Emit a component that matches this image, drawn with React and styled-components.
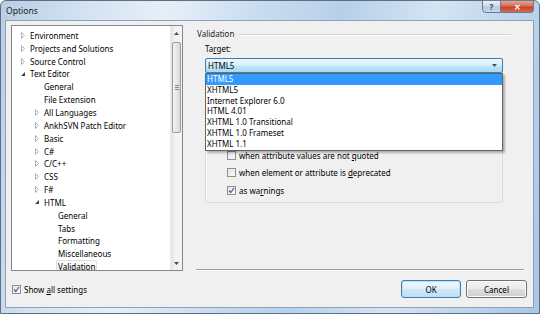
import React from 'react';
import styled, { createGlobalStyle, css } from 'styled-components';

const GlobalStyle = createGlobalStyle`
  html, body { margin: 0; padding: 0; overflow: hidden; }
  body {
    font-family: 'Noto Sans', 'Open Sans', sans-serif;
    font-size: 8px;
    color: #000;
  }
`;

// --- window frame ---
const Window = styled.div`
  width: 540px;
  height: 314px;
  box-sizing: border-box;
  display: flex;
  flex-direction: column;
  border: 1px solid #5d6f86;
  border-radius: 6px 6px 0 0;
  background: linear-gradient(100deg, #b9cde3 0%, #d3e2f1 14%, #e6eff8 28%, #c9dcef 44%, #b7d0ea 58%, #d4e4f3 74%, #aac6e4 100%);
`;

const TitleBar = styled.div`
  height: 19px;
  display: flex;
  align-items: flex-start;
  padding-left: 5px;
`;

const Title = styled.span`
  line-height: 20px;
  font-size: 8.6px;
  color: #1b1b1b;
`;

const CaptionButtons = styled.div`
  margin-left: auto;
  margin-right: 5px;
  margin-top: -1px;
  display: flex;
`;

const CaptionButton = styled.div`
  height: 13px;
  box-sizing: border-box;
  border: 1px solid #6b7b8e;
  display: flex;
  align-items: center;
  justify-content: center;
  font-size: 8px;
  font-weight: bold;
  ${p => p.$close ? css`
    width: 33px;
    border-left: none;
    border-radius: 0 0 4px 0;
    background: linear-gradient(#e8a493 0%, #d3705d 45%, #c3422b 55%, #d76a4c 100%);
    color: #fff;
  ` : css`
    width: 19px;
    border-radius: 0 0 0 4px;
    background: linear-gradient(#e9f0f7 0%, #cfdcea 45%, #b5c8dd 55%, #c9d9ea 100%);
    color: #445;
  `}
`;

const Client = styled.div`
  flex: 1;
  margin: 0 5px 5px 4px;
  border: 1px solid #8ca1b8;
  background: #f0f0f0;
  display: flex;
  flex-direction: column;
`;

const Main = styled.div`
  display: flex;
  padding: 4px 0 0 5px;
`;

// --- tree ---
const TreePanel = styled.div`
  width: 172px;
  height: 246px;
  box-sizing: border-box;
  border: 1px solid #828790;
  background: #fff;
  display: flex;
  overflow: hidden;
`;

const TreeList = styled.div`
  flex: 1;
  padding-top: 3px;
`;

const TreeRow = styled.div`
  height: 12.85px;
  display: flex;
  align-items: center;
  padding-left: ${p => 9 + p.$level * 14}px;
  white-space: nowrap;
`;

const Expander = styled.span`
  width: 7px;
  display: flex;
  align-items: center;
`;

const TreeLabel = styled.span`
  line-height: 11px;
  padding: 0 1px;
  border: 1px solid transparent;
  border-radius: 2px;
  ${p => p.$selected && css`
    border-color: #dedede;
    background: linear-gradient(#fbfbfb, #f0f0f0);
  `}
`;

const ScrollBar = styled.div`
  width: 11px;
  display: flex;
  flex-direction: column;
  background: linear-gradient(90deg, #e3e3e3, #f4f4f4 40%, #f4f4f4);
  border-left: 1px solid #ececec;
`;

const ScrollArrow = styled.div`
  height: 14px;
  display: flex;
  align-items: center;
  justify-content: center;
`;

const ScrollThumb = styled.div`
  margin: 2px 1px 0 1px;
  height: 91px;
  box-sizing: border-box;
  border: 1px solid #9a9a9a;
  border-radius: 2px;
  background: linear-gradient(90deg, #f4f4f4, #e6e6e6 50%, #d8d8d8);
  display: flex;
  align-items: center;
  justify-content: center;
`;

const Grip = styled.div`
  width: 4px;
  height: 5px;
  background: repeating-linear-gradient(#8a8a8a 0 1px, transparent 1px 2px);
`;

const ScrollTrack = styled.div`
  flex: 1;
`;

// --- right pane ---
const Pane = styled.div`
  width: 328px;
  height: 245px;
  margin-left: 13px;
  box-sizing: border-box;
  border-bottom: 1px solid #a0a0a0;
  box-shadow: 0 1px 0 #fff;
  display: flex;
  flex-direction: column;
`;

const SectionHeader = styled.div`
  height: 14px;
  margin-top: 1px;
  padding-left: 1px;
  display: flex;
  align-items: center;
  color: #1e1e1e;
`;

const HeaderLine = styled.div`
  flex: 1;
  height: 1px;
  margin: 2px 13px 0 5px;
  background: #c9d3dd;
  box-shadow: 0 1px 0 #fff;
`;

const PaneBody = styled.div`
  padding: 0 21px 0 9px;
  display: flex;
  flex-direction: column;
`;

const FieldLabel = styled.div`
  margin-top: 3px;
  height: 12px;
  line-height: 12px;
`;

const ComboWrap = styled.div`
  position: relative;
  margin-top: 3px;
  z-index: 2;
`;

const Combo = styled.div`
  height: 15px;
  box-sizing: border-box;
  border: 1px solid #3c7fb1;
  border-radius: 2px;
  background: linear-gradient(#eaf6fd 0%, #d9f0fc 45%, #bee6fd 55%, #a7d9f5 100%);
  display: flex;
  align-items: center;
  padding: 0 5px 0 2px;
`;

const ComboText = styled.span`
  flex: 1;
`;

const DropList = styled.div`
  position: absolute;
  top: 100%;
  left: 0;
  width: 298px;
  box-sizing: border-box;
  border: 1px solid #646464;
  background: #fff;
  box-shadow: 2px 2px 2px rgba(0, 0, 0, 0.28);
`;

const DropItem = styled.div`
  height: 10.8px;
  line-height: 10.8px;
  padding-left: 1px;
  white-space: nowrap;
  ${p => p.$selected && css`
    background: #3399ff;
    color: #fff;
  `}
`;

const GroupBox = styled.div`
  margin-top: 7px;
  height: 123px;
  box-sizing: border-box;
  border: 1px solid #dcdcdc;
  border-radius: 3px;
  box-shadow: inset 1px 1px 0 #fff;
  display: flex;
  flex-direction: column;
  justify-content: flex-end;
  padding: 0 0 3px 21px;
`;

const CheckRow = styled.label`
  height: 17.5px;
  display: flex;
  align-items: center;
  gap: 3px;
  white-space: nowrap;
`;

const Box = styled.span`
  width: 9px;
  height: 9px;
  box-sizing: border-box;
  border: 1px solid #8e8f8f;
  background: linear-gradient(135deg, #e4e4e4, #fbfbfb);
  display: flex;
  align-items: center;
  justify-content: center;
`;

const Key = styled.span`
  text-decoration: underline;
`;

// --- footer ---
const Footer = styled.div`
  flex: 1;
  display: flex;
  align-items: flex-start;
  padding: 9px 6px 0 6px;
`;

const FooterCheck = styled(CheckRow)`
  height: 18px;
`;

const Buttons = styled.div`
  margin-left: auto;
  display: flex;
  gap: 5px;
`;

const Button = styled.div`
  height: 18px;
  box-sizing: border-box;
  border: 1px solid ${p => p.$default ? '#3c7fb1' : '#707070'};
  border-radius: 3px;
  display: flex;
  align-items: center;
  justify-content: center;
  width: ${p => p.$width}px;
  background: ${p => p.$default
    ? 'linear-gradient(#eef7fd 0%, #e0f0fa 48%, #cfe7f6 52%, #c2e0f3 100%)'
    : 'linear-gradient(#f2f2f2 0%, #ebebeb 48%, #dddddd 52%, #cfcfcf 100%)'};
  box-shadow: inset 0 0 0 1px ${p => p.$default ? '#b6e0f7' : '#fcfcfc'};
`;

const Collapsed = () => (
  <svg width="4" height="7" viewBox="0 0 4 7">
    <polygon points="0.5,0.5 3.5,3.5 0.5,6.5" fill="#fff" stroke="#b0b0b0" strokeWidth="1" />
  </svg>
);

const Expanded = () => (
  <svg width="4" height="4" viewBox="0 0 4 4">
    <polygon points="4,0 4,4 0,4" fill="#404040" />
  </svg>
);

const Check = () => (
  <svg width="7" height="7" viewBox="0 0 7 7">
    <path d="M1 3.5 L2.8 5.5 L6 1" fill="none" stroke="#4a5f97" strokeWidth="1.2" />
  </svg>
);

const Arrow = ({ up }) => (
  <svg width="5" height="3" viewBox="0 0 5 3">
    <polygon points={up ? '0,3 5,3 2.5,0' : '0,0 5,0 2.5,3'} fill="#4d4d4d" />
  </svg>
);

const tree = [
  { label: 'Environment', level: 0, exp: 'c' },
  { label: 'Projects and Solutions', level: 0, exp: 'c' },
  { label: 'Source Control', level: 0, exp: 'c' },
  { label: 'Text Editor', level: 0, exp: 'e' },
  { label: 'General', level: 1 },
  { label: 'File Extension', level: 1 },
  { label: 'All Languages', level: 1, exp: 'c' },
  { label: 'AnkhSVN Patch Editor', level: 1, exp: 'c' },
  { label: 'Basic', level: 1, exp: 'c' },
  { label: 'C#', level: 1, exp: 'c' },
  { label: 'C/C++', level: 1, exp: 'c' },
  { label: 'CSS', level: 1, exp: 'c' },
  { label: 'F#', level: 1, exp: 'c' },
  { label: 'HTML', level: 1, exp: 'e' },
  { label: 'General', level: 2 },
  { label: 'Tabs', level: 2 },
  { label: 'Formatting', level: 2 },
  { label: 'Miscellaneous', level: 2 },
  { label: 'Validation', level: 2, selected: true },
];

const targets = ['HTML5', 'XHTML5', 'Internet Explorer 6.0', 'HTML 4.01', 'XHTML 1.0 Transitional', 'XHTML 1.0 Frameset', 'XHTML 1.1'];

const Checkbox = ({ checked }) => <Box>{checked && <Check />}</Box>;

const App = () => (
  <>
    <GlobalStyle />
    <Window>
      <TitleBar>
        <Title>Options</Title>
        <CaptionButtons>
          <CaptionButton>?</CaptionButton>
          <CaptionButton $close>✕</CaptionButton>
        </CaptionButtons>
      </TitleBar>

      <Client>
        <Main>
          <TreePanel>
            <TreeList>
              {tree.map((n, i) => (
                <TreeRow key={i} $level={n.level}>
                  <Expander>
                    {n.exp === 'c' && <Collapsed />}
                    {n.exp === 'e' && <Expanded />}
                  </Expander>
                  <TreeLabel $selected={n.selected}>{n.label}</TreeLabel>
                </TreeRow>
              ))}
            </TreeList>
            <ScrollBar>
              <ScrollArrow><Arrow up /></ScrollArrow>
              <ScrollThumb><Grip /></ScrollThumb>
              <ScrollTrack />
              <ScrollArrow><Arrow /></ScrollArrow>
            </ScrollBar>
          </TreePanel>

          <Pane>
            <SectionHeader>
              Validation
              <HeaderLine />
            </SectionHeader>
            <PaneBody>
              <FieldLabel>Ta<Key>r</Key>get:</FieldLabel>
              <ComboWrap>
                <Combo>
                  <ComboText>HTML5</ComboText>
                  <Arrow />
                </Combo>
                <DropList>
                  {targets.map((t, i) => (
                    <DropItem key={t} $selected={i === 0}>{t}</DropItem>
                  ))}
                </DropList>
              </ComboWrap>
              <GroupBox>
                <CheckRow><Checkbox /><span>when attribute values are not <Key>q</Key>uoted</span></CheckRow>
                <CheckRow><Checkbox /><span>when element or attribute is <Key>d</Key>eprecated</span></CheckRow>
                <CheckRow><Checkbox checked /><span>as wa<Key>r</Key>nings</span></CheckRow>
              </GroupBox>
            </PaneBody>
          </Pane>
        </Main>

        <Footer>
          <FooterCheck><Checkbox checked /><span>Show <Key>a</Key>ll settings</span></FooterCheck>
          <Buttons>
            <Button $default $width={60}>OK</Button>
            <Button $width={61}>Cancel</Button>
          </Buttons>
        </Footer>
      </Client>
    </Window>
  </>
);

export default App;
